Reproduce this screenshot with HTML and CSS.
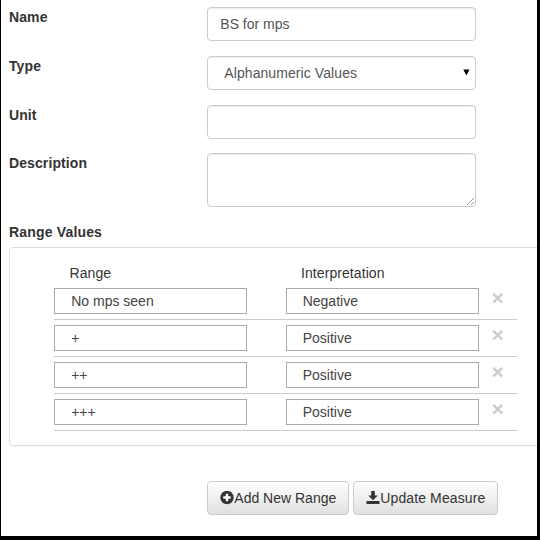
FILE: index.html
```
<!DOCTYPE html>
<html lang="en">
<head>
<meta charset="utf-8">
<title>Edit Measure</title>
<link rel="stylesheet" href="styles.css">
</head>
<body>
<form class="measure">
  <div class="row"><label for="name">Name</label><input id="name" class="control" type="text" value="BS for mps"></div>
  <div class="row"><label for="type">Type</label>
    <div id="type" class="control select"><span>Alphanumeric Values</span><svg width="7" height="7" viewBox="0 0 7 7"><path d="M0.3 0.5h6.2L3.4 6.5z"/></svg></div>
  </div>
  <div class="row"><label for="unit">Unit</label><input id="unit" class="control" type="text"></div>
  <div class="row row-tall"><label for="description">Description</label>
    <div id="description" class="control area"><svg width="9" height="9" viewBox="0 0 9 9"><path d="M1 8L8 1M5 8L8 5"/></svg></div>
  </div>
  <h2 class="section-title">Range Values</h2>
  <div class="panel">
    <div class="range-head"><span>Range</span><span>Interpretation</span></div>
    <div class="range-row"><input value="No mps seen"><input value="Negative"><button type="button" class="close">×</button></div>
    <div class="range-row"><input value="+"><input value="Positive"><button type="button" class="close">×</button></div>
    <div class="range-row"><input value="++"><input value="Positive"><button type="button" class="close">×</button></div>
    <div class="range-row"><input value="+++"><input value="Positive"><button type="button" class="close">×</button></div>
  </div>
  <div class="actions">
    <button type="button" class="btn"><svg width="14" height="14" viewBox="0 0 14 14"><circle cx="7" cy="6.5" r="6.7" fill="#333"/><path d="M7 2.8v7.4M3.3 6.5h7.4" stroke="#fff" stroke-width="2.4"/></svg>Add New Range</button>
    <button type="button" class="btn btn-save"><svg width="14" height="14" viewBox="0 0 14 14"><path fill="#333" d="M5.2 0h3.6v4.5h3L7 9.3 2.2 4.5h3zM0.5 10h13v3H0.5z"/></svg>Update Measure</button>
  </div>
</form>
</body>
</html>
```
FILE: styles.css
```
* { box-sizing: border-box; }
body {
  margin: 0;
  font: 14px/20px "Liberation Sans", Arial, sans-serif;
  color: #333;
  background: #fff;
}
.measure {
  height: 540px;
  padding: 7px 0 0 8px;
  border: solid #000;
  border-width: 0 3px 4px 1px;
  overflow: hidden;
}
.row {
  display: grid;
  grid-template-columns: 198.3px 268px;
  align-items: start;
  height: 48.8px;
}
.row-tall { height: 68.6px; }
.row label {
  font-weight: bold;
  letter-spacing: 0.1px;
}
.control {
  width: 268.3px;
  height: 34px;
  padding: 0 12px;
  border: 1px solid #ccc;
  border-radius: 4px;
  background: #fff;
  box-shadow: inset 0 1px 1px rgba(0, 0, 0, .075);
  font: inherit;
  color: #555;
}
.select {
  display: flex;
  align-items: center;
  justify-content: space-between;
  padding: 0 5px 0 16px;
  letter-spacing: 0.08px;
}
.select svg { fill: #000; }
.area {
  display: flex;
  align-items: flex-end;
  justify-content: flex-end;
  height: 54px;
  padding: 0;
}
.area svg { fill: none; stroke: #999; }
.section-title {
  margin: 0 0 5px;
  font-size: 14px;
  line-height: 20px;
  letter-spacing: 0.17px;
}
.panel {
  width: 560px;
  height: 199px;
  padding: 15px 0 0 44.2px;
  border: 1px solid #ddd;
  border-radius: 4px;
  box-shadow: 0 1px 1px rgba(0, 0, 0, .05);
}
.range-head {
  display: grid;
  grid-template-columns: 231.5px 193px;
  height: 20.5px;
  padding-left: 15.3px;
  letter-spacing: 0.08px;
}
.range-row {
  display: grid;
  grid-template-columns: 193px 193px 19px;
  column-gap: 38.5px;
  width: 463px;
  height: 36.8px;
  padding-top: 4.7px;
  border-bottom: 1px solid #ccc;
}
.range-row input {
  height: 26px;
  padding: 0 16px;
  border: 1px solid #aaa;
  border-radius: 0;
  font: inherit;
  color: #444;
}
.close {
  margin: 0 0 0 -27px;
  padding: 0;
  width: 15px;
  height: 20px;
  border: 0;
  background: none;
  font: bold 21px/20px "Liberation Sans", Arial, sans-serif;
  color: #ccc;
}
.actions {
  display: flex;
  gap: 4px;
  padding: 35px 0 0 198.3px;
}
.btn {
  display: flex;
  align-items: center;
  height: 34px;
  padding: 0 12px;
  border: 1px solid #ccc;
  border-radius: 4px;
  background: linear-gradient(#fff, #e0e0e0);
  font: inherit;
  color: #333;
  white-space: nowrap;
}
.btn-save { letter-spacing: 0.12px; }
```
